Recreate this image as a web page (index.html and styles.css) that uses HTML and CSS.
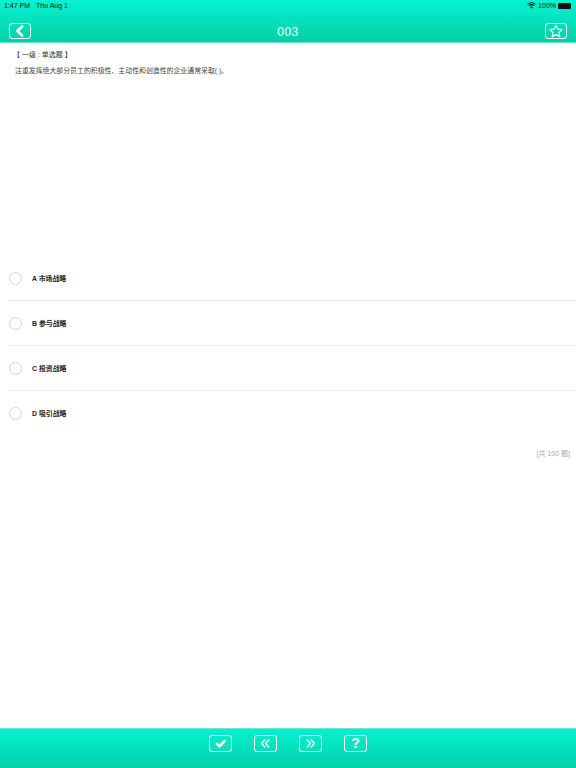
FILE: index.html
```html
<!DOCTYPE html>
<html lang="zh">
<head>
<meta charset="utf-8">
<title>003</title>
<link rel="stylesheet" href="styles.css">
</head>
<body>
<div class="app">
  <header class="topbar">
    <div class="status">
      <div class="status-left"><span>1:47 PM</span><span>Thu Aug 1</span></div>
      <div class="status-right">
        <svg class="wifi" width="9" height="7" viewBox="0 0 10 8"><path d="M5 7.600 3.400 5.800a2.300 2.300 0 0 1 3.200 0Z" fill="#111"/><path d="M2.500 4.800a3.600 3.600 0 0 1 5 0l.8-.9a4.800 4.800 0 0 0-6.600 0Z" fill="#111"/><path d="M.9 3.100a5.800 5.800 0 0 1 8.200 0l.8-.9a7 7 0 0 0-9.800 0Z" fill="#111"/></svg>
        <span>100%</span>
        <span class="battery"></span>
      </div>
    </div>
    <div class="navrow">
      <button class="iconbtn" aria-label="back">
        <svg viewBox="0 0 22 16"><path d="M13 3.500 8.500 8l4.500 4.500" fill="none" stroke="#fff" stroke-width="2.800" stroke-linecap="round" stroke-linejoin="round"/></svg>
      </button>
      <div class="title">003</div>
      <button class="iconbtn" aria-label="favorite">
        <svg viewBox="0 0 22 16"><path d="M11 2.400l1.900 3.700 4.100.5-3 2.900.8 4.100L11 11.600l-3.800 2 .8-4.100-3-2.900 4.100-.5Z" fill="none" stroke="#fff" stroke-width="1.200" stroke-linejoin="round"/></svg>
      </button>
    </div>
  </header>

  <main class="content">
    <section class="question">
      <p class="qtype">【 一级 : 单选题 】</p>
      <p class="qtext">注重发挥绝大部分员工的积极性、主动性和创造性的企业通常采取( )。</p>
    </section>
    <ul class="options">
      <li class="option"><span class="radio"></span><span class="label">A 市场战略</span></li>
      <li class="option"><span class="radio"></span><span class="label">B 参与战略</span></li>
      <li class="option"><span class="radio"></span><span class="label">C 投资战略</span></li>
      <li class="option"><span class="radio"></span><span class="label">D 吸引战略</span></li>
    </ul>
    <p class="total">[共 100 题]</p>
  </main>

  <footer class="bottombar">
    <button class="iconbtn" aria-label="submit">
      <svg viewBox="0 0 23 17"><path d="M8 9 10.500 11.300 15.500 6" fill="none" stroke="#fff" stroke-width="2.600" stroke-linecap="round" stroke-linejoin="round"/></svg>
    </button>
    <button class="iconbtn" aria-label="previous">
      <svg viewBox="0 0 23 17"><path d="M11.200 4.500 7.600 8.500l3.600 4M15.200 4.500 11.600 8.500l3.600 4" fill="none" stroke="#fff" stroke-width="1.300"/></svg>
    </button>
    <button class="iconbtn" aria-label="next">
      <svg viewBox="0 0 23 17"><path d="M7.800 4.500 11.400 8.500l-3.600 4M11.800 4.500 15.400 8.500l-3.600 4" fill="none" stroke="#fff" stroke-width="1.300"/></svg>
    </button>
    <button class="iconbtn qmark" aria-label="help">?</button>
  </footer>
</div>
</body>
</html>
```

FILE: styles.css
```css
* { box-sizing: border-box; }
html, body { margin: 0; padding: 0; height: 100%; }
body {
  background: #fff;
  font-family: "Liberation Sans", "Noto Sans CJK SC", sans-serif;
  color: #222;
}
.app { display: flex; flex-direction: column; height: 768px; overflow: hidden; }

.topbar {
  height: 43px;
  flex: none;
  background: linear-gradient(#07f2d2, #03cfa5);
  border-bottom: 1px solid #6fe8d0;
}
.status {
  height: 11px;
  margin-bottom: 1px;
  padding: 0 5px 0 4px;
  display: flex;
  justify-content: space-between;
  align-items: center;
  font-size: 7px;
  color: #111;
}
.status-left { display: flex; gap: 6px; }
.status-right { display: flex; align-items: center; gap: 2px; }
.battery {
  width: 13px;
  height: 6px;
  background: #111;
  border-radius: 1px;
  display: block;
}

.navrow {
  height: 30px;
  padding: 11px 9px 0;
  display: flex;
  justify-content: space-between;
  align-items: flex-start;
}
.title { color: #fff; font-size: 12px; line-height: 18px; letter-spacing: .5px; }

.iconbtn {
  width: 22px;
  height: 16px;
  padding: 0;
  display: flex;
  align-items: center;
  justify-content: center;
  background: transparent;
  border: 1px solid #fff;
  border-radius: 3px;
  color: #fff;
}
.iconbtn svg { flex: none; width: 22px; height: 16px; margin: -1px; }
.bottombar .iconbtn { width: 23px; height: 17px; }
.bottombar .iconbtn svg { width: 23px; height: 17px; }
.qmark { font: bold 14px/15px "Liberation Sans", sans-serif; }

.content { flex: 1; min-height: 0; display: flex; flex-direction: column; }
.question { height: 213px; padding: 7px 15px 0; }
.qtype { margin: 0 0 0 -2px; font-size: 7px; line-height: 10px; color: #333; }
.qtext { margin: 6px 0 0; font-size: 6.900px; line-height: 10px; color: #444; }

.options { list-style: none; margin: 0; padding: 0 0 0 8px; }
.option {
  height: 45px;
  display: flex;
  align-items: center;
  gap: 10.500px;
  border-bottom: 1px solid #ececec;
}
.option:last-child { border-bottom-color: transparent; }
.radio {
  width: 13px;
  height: 13px;
  margin-left: .5px;
  border: 1px solid #d4d4d4;
  border-radius: 50%;
  flex: none;
}
.label { font-size: 6.900px; font-weight: bold; color: #222; }

.total {
  margin: 13px 6px 0 0;
  text-align: right;
  font-size: 7px;
  line-height: 10px;
  color: #aaa;
}

.bottombar {
  height: 40px;
  flex: none;
  padding-top: 6px;
  background: linear-gradient(#07f0d0, #03d2a8);
  border-top: 1px solid #6fe8d0;
  display: flex;
  justify-content: center;
  align-items: flex-start;
  gap: 22px;
}
```
